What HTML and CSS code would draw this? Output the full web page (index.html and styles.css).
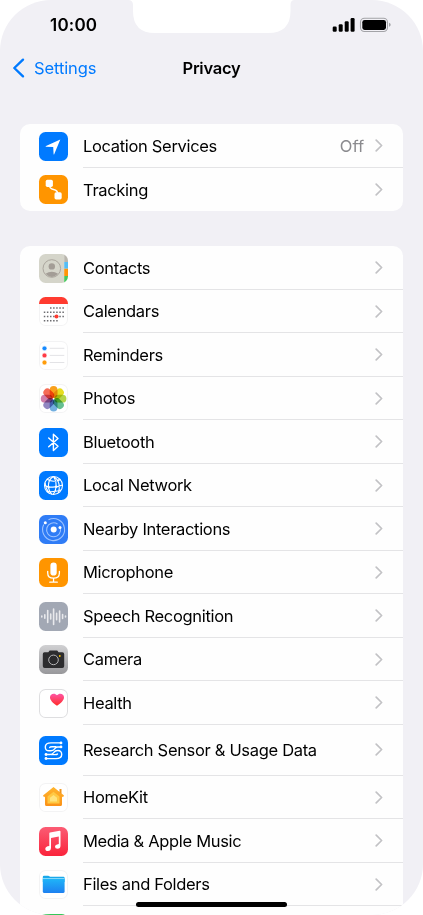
FILE: index.html
```html
<!DOCTYPE html>
<html lang="en">
<head>
    <meta charset="UTF-8">
    <meta name="viewport" content="width=device-width, initial-scale=1.0">
    <title>Privacy</title>
    <link rel="stylesheet" href="styles.css">
</head>
<body>
    <svg class="defs" width="0" height="0">
        <symbol id="chevron" viewBox="0 0 8 13"><path d="M1.2 1.2 6.6 6.5 1.2 11.8" fill="none" stroke="#c2c2c5" stroke-width="1.7" stroke-linecap="round" stroke-linejoin="round"/></symbol>
        <linearGradient id="gray" x2="0" y2="1"><stop stop-color="#d0d0d2"/><stop offset="1" stop-color="#98989b"/></linearGradient>
        <linearGradient id="pink" x2="0" y2="1"><stop stop-color="#ff55a5"/><stop offset="1" stop-color="#ff2d28"/></linearGradient>
        <linearGradient id="music" x2="0" y2="1"><stop stop-color="#fb5c74"/><stop offset="1" stop-color="#fa233b"/></linearGradient>
        <linearGradient id="folder" x2="0" y2="1"><stop stop-color="#1fb5f8"/><stop offset="1" stop-color="#1e80f0"/></linearGradient>
        <linearGradient id="house" x2="0" y2="1"><stop stop-color="#ffb52e"/><stop offset="1" stop-color="#fb9218"/></linearGradient>
    </svg>

    <div class="phone">
        <svg class="notch" viewBox="0 0 166 33"><path d="M0 0Q4.5 0 4.5 5V11Q4.5 33 26.5 33H139.500Q162 33 162 11V5Q162 0 166 0Z" transform="translate(-.5)" fill="#fff"/></svg>

        <div class="status">
            <span class="time">10:00</span>
            <svg class="signal" width="60" height="16" viewBox="0 0 60 16">
                <rect x="0.700" y="9.500" width="4" height="5.300" rx="1.200"/>
                <rect x="6.700" y="7.300" width="4" height="7.500" rx="1.200"/>
                <rect x="12.700" y="4.300" width="4" height="10.500" rx="1.200"/>
                <rect x="18.600" y="1" width="4" height="13.800" rx="1.200"/>
                <rect x="28.500" y="1.300" width="27" height="13.200" rx="4" fill="none" stroke="#a3a3a7" stroke-width="1.100"/>
                <rect x="30.300" y="3" width="23.700" height="9.900" rx="2.300"/>
                <path d="M57 5.800q1.700.6 1.700 2t-1.700 2z" fill="#a3a3a7"/>
            </svg>
        </div>

        <div class="nav">
            <a class="back"><svg width="13" height="20" viewBox="0 0 13 20"><path d="M11 1.700 2.300 10 11 18.300" fill="none" stroke="#007aff" stroke-width="2.400" stroke-linecap="round" stroke-linejoin="round"/></svg><span>Settings</span></a>
            <h1>Privacy</h1>
        </div>

        <ul class="card">
            <li class="row">
                <svg class="icon blue" viewBox="0 0 29 29"><path d="M21.300 7.500 15.300 22Q14.800 23 14.600 22L14.200 15 7 14.800Q6 14.500 7 14Z" fill="#fff"/></svg>
                <div class="text"><span>Location Services</span><em>Off</em><svg class="chev"><use href="#chevron"/></svg></div>
            </li>
            <li class="row">
                <svg class="icon orange" viewBox="0 0 29 29"><g fill="#fff"><rect x="6.700" y="4.700" width="7.200" height="7.200" rx="1.700"/><rect x="15.500" y="17.300" width="7.200" height="7.200" rx="1.700"/></g><path d="M10.300 10C10.300 17 18.700 12 18.900 19" fill="none" stroke="#fff" stroke-width="1.300"/></svg>
                <div class="text"><span>Tracking</span><svg class="chev"><use href="#chevron"/></svg></div>
            </li>
        </ul>

        <ul class="card">
            <li class="row">
                <svg class="icon" viewBox="0 0 29 29"><path fill="#d5d5ca" d="M0 0h25.200v29H0z"/><path fill="#b9b6ad" d="M25.200 0H29v8h-3.800z"/><path fill="#54bdf5" d="M25.200 8H29v6.700h-3.800z"/><path fill="#ff9408" d="M25.200 14.700H29V22h-3.800z"/><path fill="#47c85d" d="M25.200 22H29v7h-3.800z"/><circle cx="12.800" cy="14.500" r="8.800" fill="none" stroke="#aaa59d"/><circle cx="12.800" cy="12.400" r="3.200" fill="#a39d96"/><path d="M6.500 19.800Q12.800 15.500 19.100 19.800 12.800 26 6.500 19.800Z" fill="#a39d96"/></svg>
                <div class="text"><span>Contacts</span><svg class="chev"><use href="#chevron"/></svg></div>
            </li>
            <li class="row">
                <svg class="icon plain" viewBox="0 0 29 29"><path fill="#ff3b30" d="M0 0h29v7H0z"/><g stroke="#6c6c70" stroke-width="1.500" stroke-dasharray="1.500 1.600"><path d="M11 11h14M4.800 15.200H25M4.800 19.400H25M4.800 23.700h13.900"/></g><circle cx="17.500" cy="19.400" r="2" fill="#ff3b30"/></svg>
                <div class="text"><span>Calendars</span><svg class="chev"><use href="#chevron"/></svg></div>
            </li>
            <li class="row">
                <svg class="icon plain" viewBox="0 0 29 29"><g stroke-opacity=".3" stroke-width="1.300"><circle cx="5.500" cy="7.300" r="1.900" fill="#168aff" stroke="#168aff"/><circle cx="5.500" cy="14.400" r="1.900" fill="#ff3b45" stroke="#ff3b45"/><circle cx="5.500" cy="21.500" r="1.900" fill="#ff9d0a" stroke="#ff9d0a"/></g><path d="M10.700 7.300h14.600M10.700 14.400h14.600M10.700 21.500h14.600" stroke="#dcdcdf" stroke-width=".8"/></svg>
                <div class="text"><span>Reminders</span><svg class="chev"><use href="#chevron"/></svg></div>
            </li>
            <li class="row">
                <svg class="icon plain petals" viewBox="0 0 29 29">
                    <rect x="10.700" y="1.900" width="7.800" height="12" rx="3.900" fill="#f9a01c"/>
                    <rect x="10.700" y="1.900" width="7.800" height="12" rx="3.900" fill="#e7dd20" transform="rotate(45 14.600 14.700)"/>
                    <rect x="10.700" y="1.900" width="7.800" height="12" rx="3.900" fill="#b4d44a" transform="rotate(90 14.600 14.700)"/>
                    <rect x="10.700" y="1.900" width="7.800" height="12" rx="3.900" fill="#65bf91" transform="rotate(135 14.600 14.700)"/>
                    <rect x="10.700" y="1.900" width="7.800" height="12" rx="3.900" fill="#72afe0" transform="rotate(180 14.600 14.700)"/>
                    <rect x="10.700" y="1.900" width="7.800" height="12" rx="3.900" fill="#9287c2" transform="rotate(225 14.600 14.700)"/>
                    <rect x="10.700" y="1.900" width="7.800" height="12" rx="3.900" fill="#d07eaa" transform="rotate(270 14.600 14.700)"/>
                    <rect x="10.700" y="1.900" width="7.800" height="12" rx="3.900" fill="#f56b56" transform="rotate(315 14.600 14.700)"/>
                </svg>
                <div class="text"><span>Photos</span><svg class="chev"><use href="#chevron"/></svg></div>
            </li>
            <li class="row">
                <svg class="icon blue" viewBox="0 0 29 29"><path d="M9.700 10 19 18.300 14.400 22.500V6.300L19 10.500 9.700 18.800" fill="none" stroke="#fff" stroke-width="1.400" stroke-linejoin="round" stroke-linecap="round"/></svg>
                <div class="text"><span>Bluetooth</span><svg class="chev"><use href="#chevron"/></svg></div>
            </li>
            <li class="row">
                <svg class="icon blue" viewBox="0 0 29 29"><g fill="none" stroke="#fff" stroke-width="1.100"><circle cx="14.500" cy="14.500" r="9"/><path d="M14.500 5.500C8 9 8 18 13 23.500M14.500 5.500C18 10 18 19 14 23.500M14.500 5.500C21 9 21 17 19.500 22M8 8.300Q14 12 21.500 8.500M5.500 14.500Q14 18 23.500 14M8 20.500Q15 21.500 22 19M6 12Q7 18 10 22"/></g><g fill="#fff"><circle cx="9.500" cy="16" r="1.200"/><circle cx="17.100" cy="15.800" r="1.200"/><circle cx="19.500" cy="9.300" r="1"/></g></svg>
                <div class="text"><span>Local Network</span><svg class="chev"><use href="#chevron"/></svg></div>
            </li>
            <li class="row">
                <svg class="icon nearby" viewBox="0 0 29 29"><g fill="none" stroke="#9cc3ff" stroke-width="1.100"><path d="M9.500 4.800A11 11 0 1 1 4.800 9.500"/><path d="M18.500 9A7 7 0 1 0 21.300 12.800"/></g><g fill="#fff"><circle cx="14.700" cy="14.600" r="3"/><circle cx="6.300" cy="7.700" r="1.500"/><circle cx="21" cy="12.400" r="1.500"/></g></svg>
                <div class="text"><span>Nearby Interactions</span><svg class="chev"><use href="#chevron"/></svg></div>
            </li>
            <li class="row">
                <svg class="icon orange" viewBox="0 0 29 29"><rect x="11.400" y="4.600" width="6.300" height="13" rx="3.150" fill="#fff"/><path d="M8.700 13.300V15Q8.700 20.200 14.550 20.200T20.400 15V13.300M14.550 20.300V24M10.800 24.200H18.300" fill="none" stroke="#fff" stroke-width="1.300" stroke-linecap="round"/></svg>
                <div class="text"><span>Microphone</span><svg class="chev"><use href="#chevron"/></svg></div>
            </li>
            <li class="row">
                <svg class="icon speech" viewBox="0 0 29 29"><path d="M2.800 14v1M5.800 12.800v3.400M8.700 8.500v12M11.700 12v5M14.600 7v15.500M17.600 11.300v6.500M20.600 9v11M23.600 12.500v4M26.500 14v1" stroke="#e8e9ec" stroke-width="1.600" stroke-linecap="round"/></svg>
                <div class="text"><span>Speech Recognition</span><svg class="chev"><use href="#chevron"/></svg></div>
            </li>
            <li class="row">
                <svg class="icon" viewBox="0 0 29 29"><path fill="url(#gray)" d="M0 0h29v29H0z"/><path d="M5.500 7.300H9.300L10.700 5.500H18.200L19.600 7.300H23.300Q25.200 7.300 25.200 9V21Q25.200 23 23.300 23H5.700Q3.800 23 3.800 21V9Q3.800 7.300 5.500 7.300Z" fill="#2c2c2e"/><circle cx="14.500" cy="14.900" r="4.800" fill="#29292b" stroke="#b5b5b7" stroke-width="1"/><circle cx="20.800" cy="11" r=".9" fill="#ffc800"/></svg>
                <div class="text"><span>Camera</span><svg class="chev"><use href="#chevron"/></svg></div>
            </li>
            <li class="row">
                <svg class="icon plain dark" viewBox="0 0 29 29"><path d="M18 16.700C14 14 11 11.500 11 8.300 11 4.300 16 3.500 18 6.300 20 3.500 25 4.300 25 8.300 25 11.500 22 14 18 16.700Z" fill="url(#pink)"/></svg>
                <div class="text"><span>Health</span><svg class="chev"><use href="#chevron"/></svg></div>
            </li>
            <li class="row tall">
                <svg class="icon blue" viewBox="0 0 29 29"><g fill="none" stroke="#fff" stroke-width="1.400" stroke-linecap="round"><path d="M21.500 6.900H12Q6.300 6.900 6.300 11T10.500 14.800H12Q14.500 14.800 15.500 13T18.500 11H22"/><path d="M7 22.600H17Q22.700 22.600 22.700 18.500T18.500 14.500Q16 14.500 14.800 16.500T11 18.500H7"/><path d="M17 10.700H13Q11 10.700 10.700 11.500M12 18.600H16Q18 18.600 18.500 18"/></g><g fill="#fff"><circle cx="22" cy="6.900" r="1.400"/><circle cx="22" cy="10.900" r="1.400"/><circle cx="7" cy="18.500" r="1.400"/><circle cx="7" cy="22.500" r="1.400"/></g></svg>
                <div class="text"><span>Research Sensor &amp; Usage Data</span><svg class="chev"><use href="#chevron"/></svg></div>
            </li>
            <li class="row">
                <svg class="icon plain" viewBox="0 0 29 29"><path d="M14.500 4 25 12.500 24 14.200 23 13.500V21.500Q23 23 21.500 23H7.500Q6 23 6 21.500V13.500L5 14.200 4 12.500Z" fill="url(#house)"/><path d="M20.500 6H22.500V11L20.500 9.500Z" fill="#ef951f"/><path d="M14.500 8.800 20.500 13.600V20.500H8.500V13.600Z" fill="#ffc944"/><path d="M14.500 12 18 14.800V18.500H11V14.800Z" fill="#ffe37d"/></svg>
                <div class="text"><span>HomeKit</span><svg class="chev"><use href="#chevron"/></svg></div>
            </li>
            <li class="row">
                <svg class="icon" viewBox="0 0 29 29"><path fill="url(#music)" d="M0 0h29v29H0z"/><path d="M10.300 6.500Q10.300 5.800 11 5.600L20.600 3.800Q21.500 3.700 21.500 4.500V18.500Q21.500 21.800 18.500 21.800 16 21.800 16 19.700 16 17.700 19.800 17V9.500L12 11V20.500Q12 24 8.900 24 6.300 24 6.300 21.700 6.300 19.500 10.300 19Z" fill="#fff"/></svg>
                <div class="text"><span>Media &amp; Apple Music</span><svg class="chev"><use href="#chevron"/></svg></div>
            </li>
            <li class="row">
                <svg class="icon plain" viewBox="0 0 29 29"><path d="M3.800 7Q3.800 5.700 5 5.700H9Q10 5.700 11 6.700H24.500Q25.600 6.700 25.600 8V12H3.800Z" fill="#1aa8ea"/><path d="M3.800 8.700H25.600V21.500Q25.600 23 24 23H5.400Q3.800 23 3.800 21.500Z" fill="url(#folder)"/><path d="M4 8.500H25.400" stroke="#83d8fa" stroke-width="1.200"/></svg>
                <div class="text"><span>Files and Folders</span><svg class="chev"><use href="#chevron"/></svg></div>
            </li>
            <li class="row">
                <svg class="icon green" viewBox="0 0 29 29"></svg>
                <div class="text"></div>
            </li>
        </ul>

        <div class="home-bar"></div>
    </div>
</body>
</html>
```
FILE: styles.css
```css
* { box-sizing: border-box; }
body { margin: 0; background: #fff; font-family: Inter, sans-serif; color: #000; }
h1, ul { margin: 0; padding: 0; }
.defs { position: absolute; }

.phone {
    position: relative;
    width: 423px;
    height: 915px;
    overflow: hidden;
    border-radius: 51px;
    background: #f1f0f5;
}
.notch { position: absolute; top: 0; left: 128.5px; width: 166px; height: 33px; }

.status {
    display: flex;
    justify-content: space-between;
    align-items: center;
    height: 50px;
    padding: 0 31px 0 50px;
}
.time { font-size: 17px; font-weight: 600; letter-spacing: 0.2px; }

.nav {
    display: grid;
    grid-template-columns: 1fr auto 1fr;
    align-items: center;
    height: 36px;
    margin-bottom: 38.4px;
    padding: 0 12px;
}
.back { display: flex; align-items: center; gap: 9px; color: #007aff; font-size: 16.5px; letter-spacing: -0.1px; }
h1 { font-size: 16.5px; font-weight: 600; letter-spacing: -0.25px; }

.card {
    width: 383px;
    margin: 0 0 35px 20px;
    overflow: hidden;
    border-radius: 10px;
    background: #fefefe;
    list-style: none;
}
.row { display: flex; align-items: center; gap: 14.6px; height: 43.5px; padding-left: 19.4px; }
.tall { height: 51px; }
.icon { flex: none; width: 29px; height: 29px; border-radius: 6.5px; overflow: hidden; }
.blue { background: #007aff; }
.orange { background: #ff9500; }
.nearby { background: #2f7cf6; }
.speech { background: #a2a8b4; }
.green { background: #34c759; }
.plain { background: #fff; box-shadow: inset 0 0 0 1px #f3f3f4; }
.dark { box-shadow: inset 0 0 0 1px #dedee0; }
.petals rect { mix-blend-mode: multiply; }

.text {
    display: flex;
    flex: 1;
    align-items: center;
    height: 100%;
    padding-right: 20px;
    border-bottom: 1px solid #e4e4e6;
    font-size: 16.5px;
    letter-spacing: -0.32px;
    white-space: nowrap;
}
.row:last-child .text { border-bottom: 0; }
.text span { flex: 1; }
.text em { margin-right: 11px; color: #8a8a8e; font-style: normal; letter-spacing: 0; }
.chev { width: 8px; height: 13px; }

.home-bar {
    position: absolute;
    left: 136px;
    bottom: 8px;
    width: 151px;
    height: 5px;
    border-radius: 3px;
    background: #000;
}
```
